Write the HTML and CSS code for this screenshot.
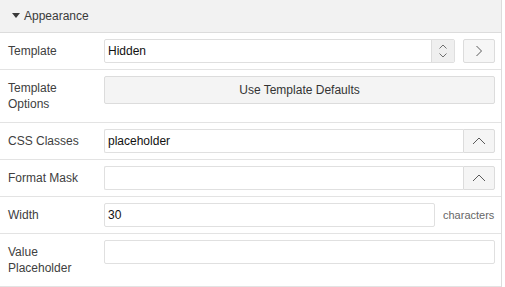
FILE: index.html
```html
<!DOCTYPE html>
<html>
<head>
<meta charset="utf-8">
<link rel="stylesheet" href="styles.css">
</head>
<body>
<div class="panel">
  <div class="hdr"><span class="tri"></span>Appearance</div>

  <div class="row">
    <div class="lbl">Template</div>
    <div class="field">
      <div class="select">
        <span class="val">Hidden</span>
        <span class="spin">
          <svg width="10" height="16" viewBox="0 0 10 16"><path d="M1.5 5.5 L5 2 L8.5 5.5 M1.5 10.5 L5 14 L8.5 10.5" fill="none" stroke="#6f6f6f" stroke-width="1"/></svg>
        </span>
      </div>
      <div class="btn">
        <svg width="8" height="12" viewBox="0 0 8 12"><path d="M1.5 1 L6.5 6 L1.5 11" fill="none" stroke="#5a5a5a" stroke-width="1"/></svg>
      </div>
    </div>
  </div>

  <div class="row">
    <div class="lbl">Template<br>Options</div>
    <div class="field">
      <div class="wide-btn">Use Template Defaults</div>
    </div>
  </div>

  <div class="row">
    <div class="lbl">CSS Classes</div>
    <div class="field">
      <div class="group">
        <span class="input grow joined"><span class="val">placeholder</span></span>
        <span class="addon">
          <svg width="14" height="8" viewBox="0 0 14 8"><path d="M1 7 L7 1 L13 7" fill="none" stroke="#5a5a5a" stroke-width="1"/></svg>
        </span>
      </div>
    </div>
  </div>

  <div class="row">
    <div class="lbl">Format Mask</div>
    <div class="field">
      <div class="group">
        <span class="input grow joined"></span>
        <span class="addon">
          <svg width="14" height="8" viewBox="0 0 14 8"><path d="M1 7 L7 1 L13 7" fill="none" stroke="#5a5a5a" stroke-width="1"/></svg>
        </span>
      </div>
    </div>
  </div>

  <div class="row">
    <div class="lbl">Width</div>
    <div class="field">
      <span class="input narrow"><span class="val">30</span></span>
      <span class="unit">characters</span>
    </div>
  </div>

  <div class="row">
    <div class="lbl">Value<br>Placeholder</div>
    <div class="field">
      <span class="input grow"></span>
    </div>
  </div>
</div>
</body>
</html>
```

FILE: styles.css
```css
* { box-sizing: border-box; }

body {
  margin: 0;
  background: #fff;
  font-family: "Liberation Sans", Arial, Helvetica, sans-serif;
  font-size: 12px;
  color: #404040;
}

.panel {
  width: 502px;
  border-right: 1px solid #dcdcdc;
}

.hdr {
  height: 33px;
  background: #f2f2f2;
  border-bottom: 1px solid #dcdcdc;
  display: flex;
  align-items: center;
  padding-left: 12px;
  padding-bottom: 1px;
  color: #3a3a3a;
}

.tri {
  width: 0;
  height: 0;
  border-left: 4px solid transparent;
  border-right: 4px solid transparent;
  border-top: 5px solid #3a3a3a;
  margin-right: 4px;
}

.row {
  display: flex;
  align-items: flex-start;
  padding: 6px 6px 6px 8px;
  border-bottom: 1px solid #e3e3e3;
}

.lbl {
  width: 96px;
  flex: none;
  padding: 4px 0;
  line-height: 16px;
  color: #404040;
}

.field {
  flex: 1;
  display: flex;
  align-items: center;
  gap: 8px;
  min-width: 0;
}

.select {
  flex: 1;
  height: 24px;
  display: flex;
  border: 1px solid #dfdfdf;
  border-radius: 2px;
  background: #fff;
  overflow: hidden;
}

.val {
  flex: 1;
  padding-left: 3px;
  line-height: 22px;
  color: #111;
}

.spin {
  width: 23px;
  flex: none;
  background: #efefef;
  border-left: 1px solid #dcdcdc;
  display: flex;
  align-items: center;
  justify-content: center;
}

.btn {
  width: 32px;
  height: 24px;
  flex: none;
  border: 1px solid #dcdcdc;
  border-radius: 2px;
  background: #f6f6f6;
  display: flex;
  align-items: center;
  justify-content: center;
}

.wide-btn {
  flex: 1;
  height: 28px;
  border: 1px solid #dcdcdc;
  border-radius: 2px;
  background: #f4f4f4;
  display: flex;
  align-items: center;
  justify-content: center;
  color: #333;
}

.group {
  flex: 1;
  display: flex;
}

.input {
  height: 24px;
  display: flex;
  border: 1px solid #e0e0e0;
  border-radius: 2px;
  background: #fff;
}

.grow { flex: 1; }

.joined {
  border-right: none;
  border-radius: 2px 0 0 2px;
}

.addon {
  width: 32px;
  height: 24px;
  flex: none;
  border: 1px solid #dcdcdc;
  border-radius: 0 2px 2px 0;
  background: #f5f5f5;
  display: flex;
  align-items: center;
  justify-content: center;
}

.narrow { width: 331px; flex: none; }

.unit {
  font-size: 11px;
  color: #666;
}
```
